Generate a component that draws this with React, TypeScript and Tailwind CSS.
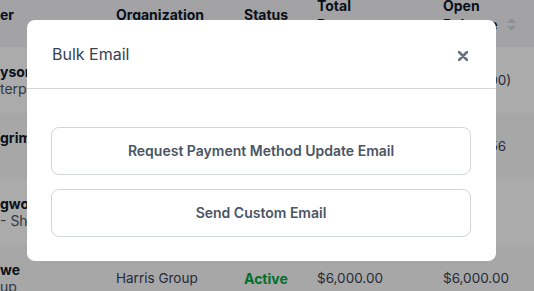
import React from "react";

interface Row {
  name: string;
  sub: string;
  org: string;
  status: string;
  total: string;
  open: string;
}

const rows: Row[] = [
  { name: "yson", sub: "terprises", org: "", status: "", total: "", open: "$1,250.00)" },
  { name: "grim", sub: "\u00a0", org: "", status: "", total: "", open: "$1,234.56" },
  { name: "gwood", sub: "- Shield", org: "", status: "", total: "", open: "" },
  { name: "we", sub: "up", org: "Harris Group", status: "Active", total: "$6,000.00", open: "$6,000.00" },
];

function SortIcon() {
  return (
    <svg width="9" height="13" viewBox="0 0 9 13" className="mt-[20px]">
      <path d="M4.5 0 L9 5 L0 5 Z" fill="#d1d5db" />
      <path d="M4.5 13 L9 8 L0 8 Z" fill="#d1d5db" />
    </svg>
  );
}

export default function App() {
  return (
    <div
      className="relative h-[291px] w-[534px] overflow-hidden bg-white text-[13.5px] text-gray-700"
      style={{ fontFamily: "Inter, 'Noto Sans', sans-serif" }}
    >
      {/* table behind the dialog */}
      <div className="-mt-[18px]">
        <div className="flex h-[65px] items-center bg-gray-100 text-[14px] font-bold leading-[19px] text-gray-900">
          <div className="w-[116px] shrink-0 whitespace-nowrap">er</div>
          <div className="w-[128px] shrink-0">Organization</div>
          <div className="w-[73px] shrink-0">Status</div>
          <div className="w-[126px] shrink-0">
            Total
            <br />
            Revenue
          </div>
          <div className="w-[64px] shrink-0">
            Open
            <br />
            Balance
          </div>
          <div className="flex flex-1 items-center">
            <SortIcon />
          </div>
        </div>
        {rows.map((r, i) => (
          <div
            key={i}
            className={`flex h-[66px] items-center ${i % 2 === 0 ? "bg-white" : "bg-gray-50"}`}
          >
            <div className="w-[116px] shrink-0 overflow-hidden whitespace-nowrap">
              <div className="text-[14px] font-bold leading-[18px] text-gray-900">{r.name}</div>
              <div className="text-[14px] leading-[16px] text-gray-600">{r.sub}</div>
            </div>
            <div className="w-[128px] shrink-0">{r.org}</div>
            <div className="w-[73px] shrink-0 text-[14px] font-bold text-green-600">{r.status}</div>
            <div className="w-[126px] shrink-0">{r.total}</div>
            <div className="flex-1 whitespace-nowrap">{r.open}</div>
          </div>
        ))}
      </div>

      {/* overlay + dialog */}
      <div className="absolute inset-0 bg-black/[0.33] pl-[27px] pt-[20px]">
        <div className="w-[469px] rounded-lg bg-white">
          <div className="flex items-center justify-between border-b border-gray-300 py-[22px] pl-[25px] pr-[21px]">
            <h2 className="text-base leading-6 text-gray-700">Bulk Email</h2>
            <button className="flex h-6 w-6 translate-y-[2px] items-center justify-center text-gray-500">
              <svg width="10" height="10" viewBox="0 0 10 10">
                <path d="M1 1 L9 9 M9 1 L1 9" stroke="currentColor" strokeWidth="2.6" strokeLinecap="round" />
              </svg>
            </button>
          </div>
          <div className="px-6 pb-6 pt-6">
            <button className="mt-[14px] flex h-12 w-[420px] items-center justify-center rounded-lg border border-gray-300 text-sm font-semibold text-gray-600">
              Request Payment Method Update Email
            </button>
            <button className="mt-[14px] flex h-12 w-[420px] items-center justify-center rounded-lg border border-gray-300 text-sm font-semibold text-gray-600">
              Send Custom Email
            </button>
          </div>
        </div>
      </div>
    </div>
  );
}
